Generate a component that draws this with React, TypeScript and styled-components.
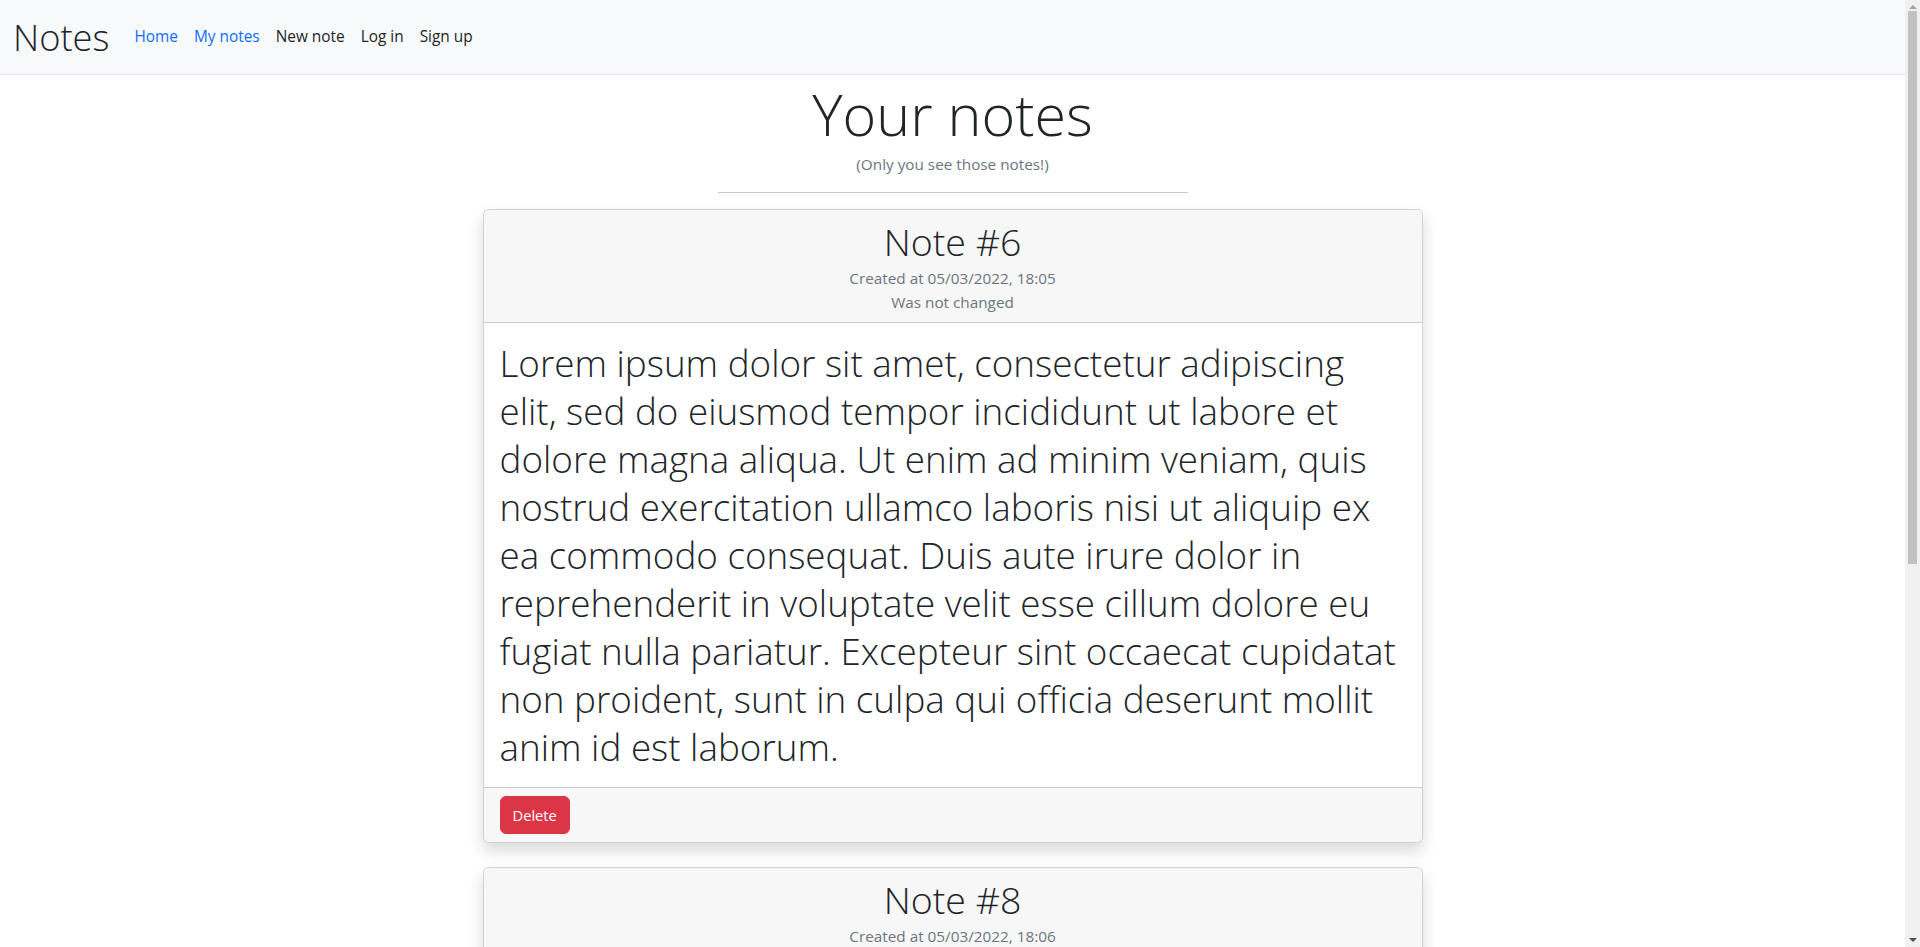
import React from 'react';
import styled, { createGlobalStyle } from 'styled-components';

const GlobalStyle = createGlobalStyle`
  * {
    box-sizing: border-box;
  }
  html, body {
    overflow: hidden;
  }
  body {
    margin: 0;
    font-family: 'Open Sans', 'Noto Sans', sans-serif;
    font-size: 16px;
    line-height: 1.5;
    color: #212529;
    background: #fff;
  }
`;

interface INote {
  id: number;
  createdAt: string;
  changedAt?: string;
  lines: string[];
}

const lorem = [
  'Lorem ipsum dolor sit amet, consectetur adipiscing',
  'elit, sed do eiusmod tempor incididunt ut labore et',
  'dolore magna aliqua. Ut enim ad minim veniam, quis',
  'nostrud exercitation ullamco laboris nisi ut aliquip ex',
  'ea commodo consequat. Duis aute irure dolor in',
  'reprehenderit in voluptate velit esse cillum dolore eu',
  'fugiat nulla pariatur. Excepteur sint occaecat cupidatat',
  'non proident, sunt in culpa qui officia deserunt mollit',
  'anim id est laborum.',
];

const notes: INote[] = [
  { id: 6, createdAt: '05/03/2022, 18:05', lines: lorem },
  { id: 8, createdAt: '05/03/2022, 18:06', lines: lorem },
];

const navLinks = [
  { label: 'Home', active: true },
  { label: 'My notes', active: true },
  { label: 'New note', active: false },
  { label: 'Log in', active: false },
  { label: 'Sign up', active: false },
];

const App = (): JSX.Element => {
  return (
    <>
      <GlobalStyle />
      <StyledPage>
        <StyledNavbar>
          <StyledBrand href="#">Notes</StyledBrand>
          <StyledNav>
            {navLinks.map((link) => (
              <StyledNavLink key={link.label} href="#" active={link.active}>
                {link.label}
              </StyledNavLink>
            ))}
          </StyledNav>
        </StyledNavbar>

        <StyledMain>
          <StyledTitle>Your notes</StyledTitle>
          <StyledSubtitle>(Only you see those notes!)</StyledSubtitle>
          <StyledDivider />

          {notes.map((note) => (
            <StyledCard key={note.id}>
              <StyledCardHeader>
                <StyledNoteTitle>Note #{note.id}</StyledNoteTitle>
                <StyledMeta>Created at {note.createdAt}</StyledMeta>
                <StyledMeta>
                  {note.changedAt ? `Changed at ${note.changedAt}` : 'Was not changed'}
                </StyledMeta>
              </StyledCardHeader>
              <StyledCardBody>
                {note.lines.map((line, i) => (
                  <React.Fragment key={i}>
                    {line}
                    {i < note.lines.length - 1 && <br />}
                  </React.Fragment>
                ))}
              </StyledCardBody>
              <StyledCardFooter>
                <StyledDeleteButton type="button">Delete</StyledDeleteButton>
              </StyledCardFooter>
            </StyledCard>
          ))}
        </StyledMain>
      </StyledPage>

      <StyledScrollbar>
        <StyledArrow direction="up" />
        <StyledThumb />
        <StyledArrow direction="down" />
      </StyledScrollbar>
    </>
  );
};

export default App;

const StyledPage = styled.div`
  margin-right: 15px;
`;

const StyledNavbar = styled.nav`
  display: flex;
  align-items: center;
  padding: 8px 12px 8px 13px;
  background: #f8f9fa;
  border-bottom: 1px solid #dee2e6;
`;

const StyledBrand = styled.a`
  padding: 5px 0;
  margin-right: 17px;
  font-size: 36.3px;
  font-weight: 300;
  line-height: 48px;
  color: #212529;
  text-decoration: none;
`;

const StyledNav = styled.div`
  display: flex;
  align-items: center;
`;

const StyledNavLink = styled.a<{ active?: boolean }>`
  padding: 8px;
  font-size: 15.4px;
  line-height: 24px;
  text-decoration: none;
  color: ${(props) => (props.active ? '#0d6efd' : '#212529')};
`;

const StyledMain = styled.main`
  display: flex;
  flex-direction: column;
  align-items: center;
  padding-bottom: 24px;
`;

const StyledTitle = styled.h1`
  margin: 0;
  padding-top: 2px;
  font-size: 57.5px;
  font-weight: 300;
  line-height: 75px;
`;

const StyledSubtitle = styled.small`
  display: block;
  font-size: 15.3px;
  line-height: 24px;
  color: #6c757d;
`;

const StyledDivider = styled.hr`
  width: 470px;
  margin: 16px 0;
  border: 0;
  border-top: 1px solid #c8c9ca;
`;

const StyledCard = styled.div`
  width: 940px;
  margin-bottom: 24px;
  background: #fff;
  border: 1px solid rgba(0, 0, 0, 0.175);
  border-radius: 6px;
  box-shadow: 0 8px 16px rgba(0, 0, 0, 0.15);
  overflow: hidden;
`;

const StyledCardHeader = styled.div`
  padding: 8px 16px;
  text-align: center;
  background: #f7f7f7;
  border-bottom: 1px solid rgba(0, 0, 0, 0.175);
`;

const StyledNoteTitle = styled.h2`
  margin: 0;
  font-size: 37.5px;
  font-weight: 300;
  line-height: 48px;
`;

const StyledMeta = styled.div`
  font-size: 15.3px;
  line-height: 24px;
  color: #6c757d;
`;

const StyledCardBody = styled.div`
  padding: 16px;
  font-size: 36.8px;
  font-weight: 300;
  line-height: 48px;
  white-space: nowrap;
`;

const StyledCardFooter = styled.div`
  padding: 8px 16px;
  background: #f7f7f7;
  border-top: 1px solid rgba(0, 0, 0, 0.175);
`;

const StyledDeleteButton = styled.button`
  padding: 6px 12px;
  font-family: inherit;
  font-size: 14.7px;
  line-height: 24px;
  color: #fff;
  background: #dc3545;
  border: 1px solid #dc3545;
  border-radius: 6px;
  cursor: pointer;
`;

const StyledScrollbar = styled.div`
  position: fixed;
  top: 0;
  right: 0;
  width: 15px;
  height: 100vh;
  display: flex;
  flex-direction: column;
  align-items: center;
  background: #f1f1f1;
`;

const StyledThumb = styled.div`
  width: 9px;
  height: 553px;
  margin-top: 2px;
  background: #c1c1c1;
`;

const StyledArrow = styled.div<{ direction: 'up' | 'down' }>`
  width: 0;
  height: 0;
  margin-top: ${(props) => (props.direction === 'up' ? '5px' : 'auto')};
  margin-bottom: ${(props) => (props.direction === 'down' ? '5px' : '0')};
  border-left: 4px solid transparent;
  border-right: 4px solid transparent;
  ${(props) =>
    props.direction === 'up'
      ? 'border-bottom: 4px solid #a3a3a3;'
      : 'border-top: 4px solid #505050;'}
`;
